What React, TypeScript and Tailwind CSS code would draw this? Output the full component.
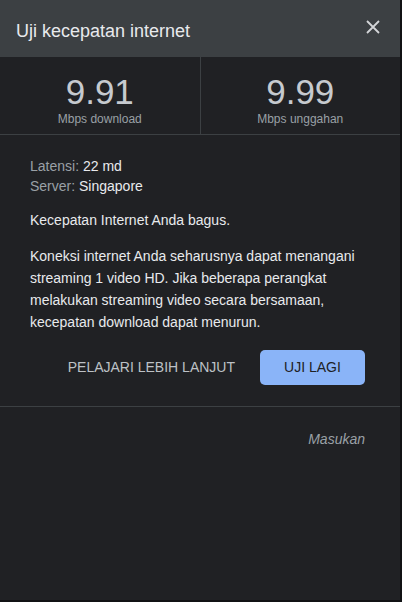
import React from 'react';

function Stat({ value, label }: { value: string; label: string }) {
  return (
    <div className="flex flex-1 flex-col items-center pt-[15px]">
      <div className="text-[35px] leading-[40px] text-[#c6cacf]">{value}</div>
      <div className="text-[12px] leading-[14px] text-[#9aa0a6]">{label}</div>
    </div>
  );
}

export default function App() {
  return (
    <div className="h-[602px] w-[402px] overflow-hidden bg-[#111214] font-['Liberation_Sans',Arial,sans-serif]">
      <div className="flex h-[600px] w-[400px] flex-col bg-[#202124]">
        <div className="flex h-[57px] items-center justify-between bg-[#3c4043] pl-[16px] pr-[20px]">
          <div className="pt-[6px] text-[18px] text-[#e8eaed]">Uji kecepatan internet</div>
          <svg width="14" height="14" viewBox="0 0 14 14" className="mb-[3px]">
            <path d="M1 1 L13 13 M13 1 L1 13" stroke="#d3d5d8" strokeWidth="1.8" />
          </svg>
        </div>

        <div className="flex h-[78px] border-b border-[#3c4043]">
          <Stat value="9.91" label="Mbps download" />
          <div className="w-px bg-[#3c4043]" />
          <Stat value="9.99" label="Mbps unggahan" />
        </div>

        <div className="flex flex-col pl-[30px] pr-[35px] pt-[21px] text-[14px] text-[#e8eaed]">
          <div className="leading-[20px]">
            <span className="text-[#9aa0a6]">Latensi: </span>22 md
          </div>
          <div className="leading-[20px]">
            <span className="text-[#9aa0a6]">Server: </span>Singapore
          </div>
          <div className="mt-[13px] leading-[22px]">Kecepatan Internet Anda bagus.</div>
          <div className="mt-[14px] leading-[22px]">
            Koneksi internet Anda seharusnya dapat menangani streaming 1 video HD. Jika beberapa
            perangkat melakukan streaming video secara bersamaan, kecepatan download dapat
            menurun.
          </div>

          <div className="mt-[17px] flex items-center justify-end gap-[25px]">
            <span className="text-[14px] text-[#bdc1c6]">PELAJARI LEBIH LANJUT</span>
            <button className="h-[35px] w-[105px] rounded-[5px] bg-[#8ab4f8] text-[14px] text-[#202124]">
              UJI LAGI
            </button>
          </div>
        </div>

        <div className="mt-[21px] h-px bg-[#3c4043]" />

        <div className="flex justify-end pr-[35px] pt-[22px]">
          <span className="text-[14px] italic text-[#9aa0a6]">Masukan</span>
        </div>
      </div>
    </div>
  );
}
